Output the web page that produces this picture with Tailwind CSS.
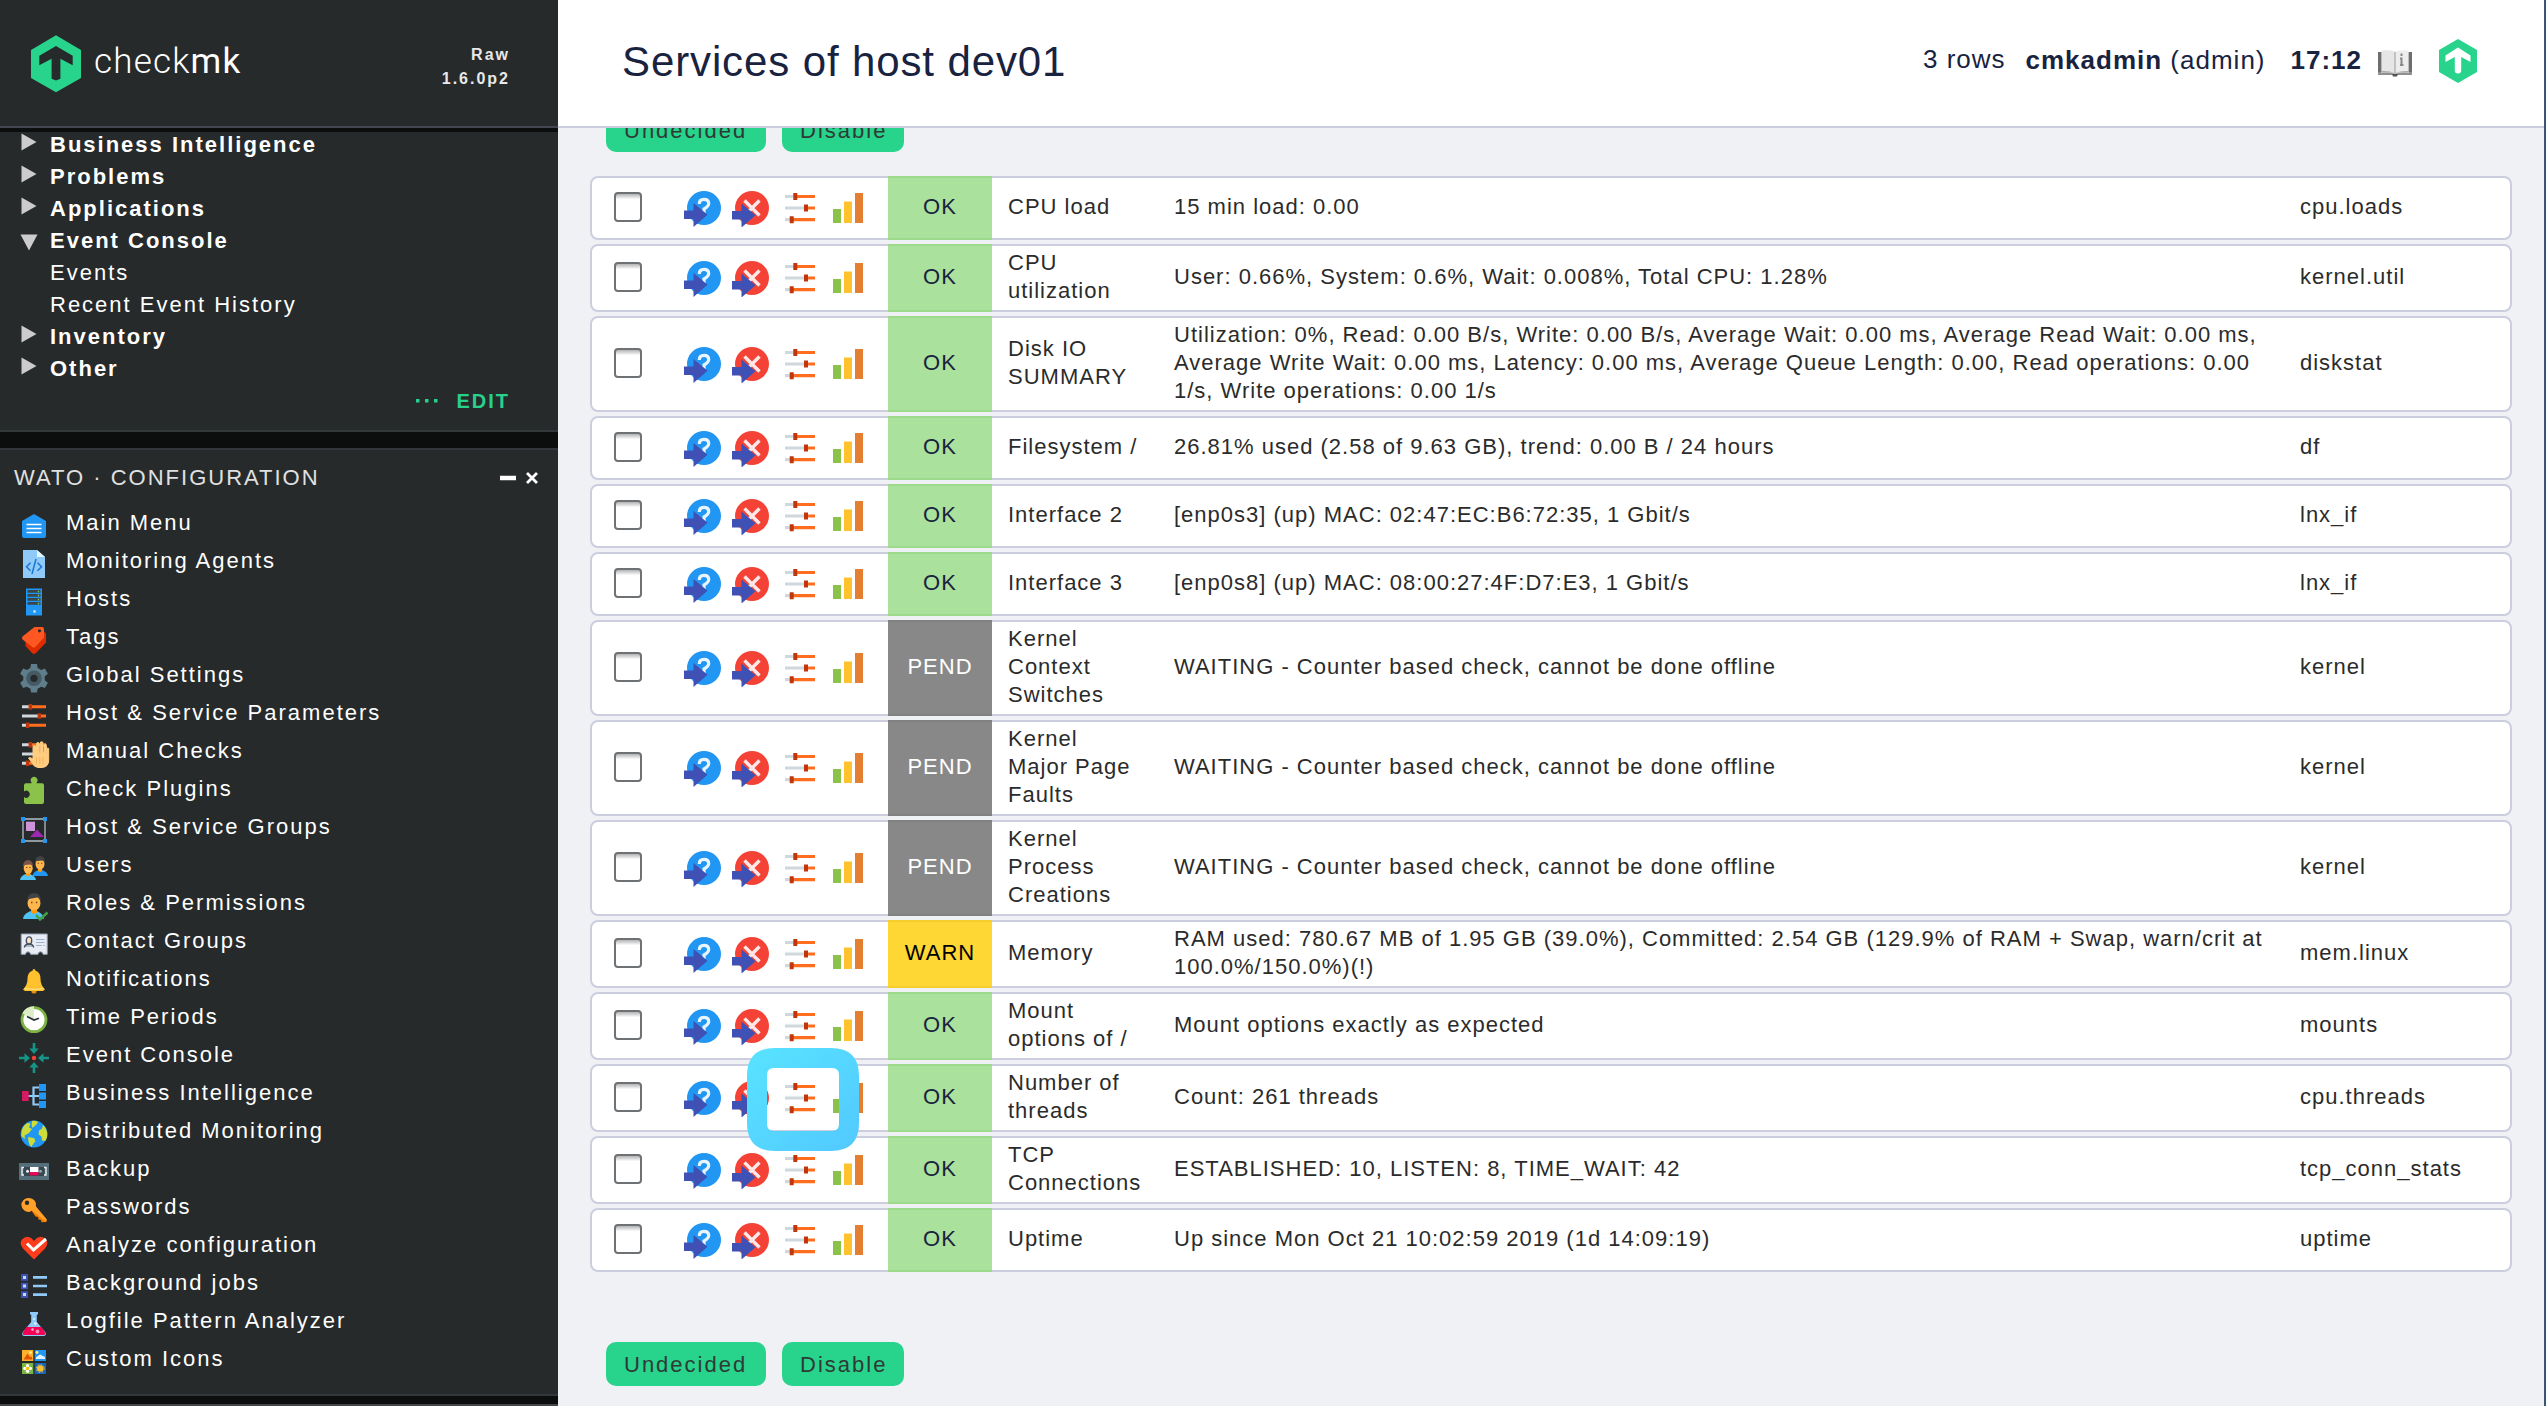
<!DOCTYPE html>
<html lang="en">
<head>
<meta charset="utf-8">
<title>Services of host dev01</title>
<script src="https://cdn.jsdelivr.net/npm/@tailwindcss/browser@4"></script>
</head>
<body class="flex h-[1406px] w-[2546px] overflow-hidden bg-[#f0f1f4] font-['Liberation_Sans',Arial,sans-serif] text-[22px] leading-[28px]">

<svg class="hidden">
  <defs>
    <symbol id="params" viewBox="0 0 32 32"><path stroke="#cfd8dc" stroke-width="3" d="M4 6.7h8M4 16h17M4 25.3h6"/><path stroke="#ff6d1f" stroke-width="3" d="M12 6.7h16M21 16h7M10 25.3h18"/><path stroke="#bf360c" stroke-width="3.4" d="M12.3 4v5.4M21.3 13.3v5.4M9.6 22.6v5.4"/></symbol>
    <symbol id="menu" viewBox="0 0 32 32"><path fill="#2196f3" d="M16 4 28 11v15a2 2 0 0 1-2 2H6a2 2 0 0 1-2-2V11z"/><path stroke="#fff" stroke-width="1.4" d="M8.500 14.500h15M8.500 18.500h15M8.500 22.500h15"/></symbol>
    <symbol id="agents" viewBox="0 0 32 32"><path fill="#90caf9" d="M5 2h14l8 7v21H5z"/><path fill="#e1f5fe" d="M19 2v7h8z"/><path fill="none" stroke="#1976d2" stroke-width="1.500" d="m12.500 14.700-4 4 4 4M19.500 14.700l4 4-4 4M18 11l-4 15"/></symbol>
    <symbol id="hosts" viewBox="0 0 32 32"><path fill="#2196f3" d="M8 2.500h16v27H8z"/><path fill="#37474f" d="M9.500 4h13v2.800h-13zM9.500 8h13v2.800h-13zM9.500 12h13v2.800h-13zM9.500 16h13v2.800h-13z"/><path stroke="#8bc34a" stroke-width="1.400" d="M20.500 4.800v1.400M20.500 8.800v1.400M20.500 12.800v1.400M20.500 16.800v1.400"/><circle cx="16.500" cy="25.500" r="1.400" fill="#bbdefb"/></symbol>
    <symbol id="tags" viewBox="0 0 32 32"><path fill="#dd2c00" d="M24 6 28 9.500v9L18 29q-2 2-4 0L7.500 22V17z"/><path fill="#ff5722" d="M16.500 3H24q2 0 2 2v8.500L17.300 23q-1.500 1.500-3 0L4.500 15.500q-1-1.500 0-3z"/><circle cx="21.500" cy="6.800" r="1.600" fill="#262a2b"/></symbol>
    <symbol id="gear" viewBox="0 0 32 32"><g fill="#607d8b"><circle cx="16" cy="16.300" r="10.800"/><path d="M13 2h6l1 6h-8zM13 30.600h6l1-6h-8z"/><path transform="rotate(60 16 16.300)" d="M13 2h6l1 6h-8zM13 30.600h6l1-6h-8z"/><path transform="rotate(120 16 16.300)" d="M13 2h6l1 6h-8zM13 30.600h6l1-6h-8z"/></g><circle cx="16" cy="16.300" r="7.800" fill="#455a64"/><circle cx="16" cy="16.300" r="3.600" fill="#262a2b"/></symbol>
    <symbol id="manual" viewBox="0 0 32 32"><use href="#params" width="32" height="32"/><path fill="#ffcc80" stroke="#ffcc80" stroke-linejoin="round" d="M15 17V9q0-1.500 1.300-1.500T17.500 9v6h1V6q0-1.500 1.400-1.500T21.300 6v9h1V5q0-1.300 1.300-1.300T25 5v10h1V7.500Q26 6 27.200 6t1.200 1.500V16h.6v-5q0-1 .8-1t.9 1V22q0 7-6.700 7.500h-4Q16 29 14.500 25.500L10.500 20q1.500-1.500 4.500 1z"/><path stroke="#f5b55f" d="M18.500 19v7M21.800 19v7M25 19v7"/></symbol>
    <symbol id="plugins" viewBox="0 0 32 32"><path fill="#8bc34a" d="M8 7.300h5.500V6.500A3.400 3.400 0 1 1 18.700 6.500V7.300H24a2 2 0 0 1 2 2V26a2 2 0 0 1-2 2H8a2 2 0 0 1-2-2V21a3.500 3.500 0 1 0 0-5.500V9.300a2 2 0 0 1 2-2z"/></symbol>
    <symbol id="groups" viewBox="0 0 32 32"><path fill="none" stroke="#b0bec5" stroke-width="1.300" d="M5 5h22v22H5z"/><path fill="#2196f3" d="M3 3h4v4H3zM25 3h4v4h-4zM3 25h4v4H3zM25 25h4v4h-4z"/><path fill="#ce93d8" d="M8 7.700h9V17H8z"/><path fill="#9c27b0" d="m12 23 7-7.500 7 7.500z"/></symbol>
    <symbol id="users" viewBox="0 0 32 32"><path fill="#2196f3" d="M14.500 24q.5-5 7.500-6.500Q29.500 19 30 24z"/><path fill="#ff9800" d="M20 15h4v4q-2 2-4 0z"/><ellipse cx="22" cy="12" rx="4.500" ry="5.700" fill="#ffb74d"/><path fill="#424242" d="M17 11.500Q16.500 4 22.500 4 27.500 4.500 27 11.500 26 8.500 24 8.500L18.500 9z"/><path fill="#4fc3f7" d="M2 28q.5-5 7.500-6.500Q17.500 23 18 28z"/><path fill="#ff9800" d="M8 19h4.500v4.200q-2.200 1.600-4.500 0z"/><ellipse cx="10.200" cy="16.300" rx="4.500" ry="5.700" fill="#ffb74d"/><path fill="#795548" d="M5 15.500Q4.500 8 10.500 8q5 .5 4.500 7.500-1-3-3-3l-5.500.5z"/><path stroke="#784719" d="M8 15.500h1.300M11.300 15.500h1.300M19.700 11.300H21M23 11.300h1.300"/></symbol>
    <symbol id="roles" viewBox="0 0 32 32"><path fill="#4fc3f7" d="M5 29q.5-7 11-8.500Q25 22 26 29z"/><path fill="#ff9800" d="M13 17h6v5.500q-3 2.500-6 0z"/><ellipse cx="16" cy="13" rx="6.500" ry="7.500" fill="#ffb74d"/><path fill="#424242" d="M9.300 12.500Q8.500 3 16.500 3q7 .5 6.200 9.500-1-5-3.700-5l-8 1.500z"/><path stroke="#784719" stroke-width="1.300" d="M13 12.500h1.500M17.800 12.500h1.500"/><path fill="none" stroke="#43a047" stroke-width="2.600" d="m18 25 4 4.500 7.500-7"/></symbol>
    <symbol id="contact" viewBox="0 0 32 32"><path fill="#e8edf5" stroke="#9aa3b5" d="M3.200 6h26v20.300H25a2.500 2.500 0 1 0-5 0h-7.500a2.500 2.500 0 1 0-5 0H3.200z"/><path fill="#b0bec5" d="M6 19q1-3.500 5-3.500t5 3.500z"/><ellipse cx="11" cy="12.500" rx="2.700" ry="3.600" fill="#fbe1c8" stroke="#455264" stroke-width="1.400"/><path fill="none" stroke="#455264" stroke-width="1.300" d="M6.300 19.500q.7-3.500 4.700-3.500t4.700 3.500"/><path stroke="#9db4cf" stroke-width="1.200" d="M18 11.500h8.500M18 14.500h8.500M18 17.500h6M25.200 17.500h1.500"/></symbol>
    <symbol id="bell" viewBox="0 0 32 32"><circle cx="16" cy="25" r="2.600" fill="#e08e0b"/><path fill="#ffc12e" d="M16 3q1.500 0 1.500 1.800Q22.500 6 22.500 13q0 6 4.500 10.500L25 25H7l-2-1.500Q9.500 19 9.500 13q0-7 5-8.200Q14.500 3 16 3z"/><path fill="none" stroke="#ffe082" stroke-width="1.200" d="M6.500 22.300q9.500 2.200 19 0"/></symbol>
    <symbol id="clock" viewBox="0 0 32 32"><circle cx="16" cy="15.700" r="12" fill="#fff" stroke="#7cb342" stroke-width="2.800"/><path fill="#dcedc8" d="M16 15.700V2.300A13.400 13.400 0 0 0 4.300 9.300z"/><path fill="none" stroke="#263238" stroke-width="1.700" d="m9 12.500 7 3.500 5-1.800"/></symbol>
    <symbol id="event" viewBox="0 0 32 32"><circle cx="16" cy="16" r="2.200" fill="#f44336"/><path fill="#159588" d="M14.700 1h2.600v5.500h3.400L16 12l-4.700-5.500h3.400zM14.700 31h2.600v-5.500h3.400L16 20l-4.700 5.500h3.400zM1 14.700v2.600h5.500v3.400L12 16l-5.500-4.700v3.400zM31 14.700v2.600h-5.500v3.400L20 16l5.500-4.700v3.400z"/></symbol>
    <symbol id="bi" viewBox="0 0 32 32"><path fill="none" stroke="#90caf9" stroke-width="2.200" d="M10 16h12M22 7.500h-6.500v17H22"/><path fill="#d81b60" d="M4 11h6.700v10H4z"/><path fill="#2196f3" d="M21 4h7v7h-7zM21 12.500h7v7h-7zM21 21h7v7h-7z"/></symbol>
    <symbol id="globe" viewBox="0 0 32 32"><circle cx="16" cy="16" r="13.400" fill="#2196f3"/><path fill="#cddc39" d="M14 3q3.500-.5 6 .8-.5 2.500-3.500 4.500L14.500 10l-.8-3zM9 5l3.500.500-1.500 4 3 1.500-3 4-4.500 2.500.5 3.500L3.200 18Q3 9.500 9 5zM10 19l6 1 1.500 3-3 4-1 2q-2.500-1.500-3-5.500zM25 7q4.300 4 4.300 9.500 0 4-2 6.500L24 22.500l-.5-4-3-2 .5-4 3-2z"/></symbol>
    <symbol id="backup" viewBox="0 0 32 32"><path fill="#546e7a" d="M1 7h30v17H1z"/><path fill="#37474f" d="M5.500 11h21v9h-21z"/><path fill="none" stroke="#eceff1" stroke-width="1.400" d="M6 11.500H4v7.500h2M26 11.500h2v7.500h-2"/><circle cx="9.500" cy="15.300" r="1.500" fill="#eceff1"/><circle cx="22.500" cy="15.300" r="1.500" fill="#90a4ae"/><path fill="#fff" d="M12 11h8.500v5.200H12z"/><path fill="#f50057" d="M12 16.200h8.500v3.100H12z"/></symbol>
    <symbol id="key" viewBox="0 0 32 32"><path fill="#f57c00" d="m13 16 3-2 12.500 11.500V28l-5 .3-.5-2.300-2.500-.5-.5-2.500-2.500-.5z"/><path fill="#ffa029" d="M11 4a7 7 0 0 1 7 8.500L28.500 25v2l-1 .5L14 16.500l-2 1.300A7 7 0 1 1 11 4z"/><circle cx="9" cy="8.800" r="2.200" fill="#262a2b"/></symbol>
    <symbol id="heart" viewBox="0 0 32 32"><path fill="#ff3d1c" d="M16 27.500 5 16.500Q1 11.500 4 7.500q4.500-5 9.500-1.200L16 9l2.500-2.700q5-3.800 9.500 1.200 3 4-1 9z"/><path fill="none" stroke="#fff" stroke-width="3" d="m9 11.500 6.500 6.500L28 7"/></symbol>
    <symbol id="jobs" viewBox="0 0 32 32"><path fill="#3f51b5" d="M3 4h7v6.700H3zM3 12.700h7v6.600H3zM3 21.300h7V28H3z"/><path fill="#bbdefb" d="M5 5.900h3v3H5zM5 14.500h3v3H5zM5 23.100h3v3H5z"/><path stroke="#90caf9" stroke-width="2.700" d="M15 7.300h14M15 16h14M15 24.700h14"/></symbol>
    <symbol id="flask" viewBox="0 0 32 32"><path fill="#90caf9" d="M12 4h8v2.500h-1.200V14L27.500 24.500q1 3.500-2 3.500h-19q-3 0-2-3.500L13.200 14V6.500H12z"/><path fill="#f50057" d="M8.500 19h15l3.500 5.500q.5 2.500-1.500 2.500h-19Q4.500 27 5 24.500z"/><circle cx="14.500" cy="21.500" r="1.300" fill="#f8bbd0"/><circle cx="19.500" cy="23.500" r="1.900" fill="#f48fb1"/><circle cx="16" cy="11" r="1" fill="#e3f2fd"/><circle cx="17.300" cy="15.500" r="1.300" fill="#e3f2fd"/></symbol>
    <symbol id="custom" viewBox="0 0 32 32"><path fill="#fbb12d" d="M4 4h11.300v11H4z"/><path fill="#2196f3" d="M16.700 4H28v11H16.700z"/><path fill="#7cb342" d="M4 17h11.300v11H4z"/><path fill="#1565c0" d="M16.700 17H28v11H16.700z"/><path fill="#e65100" d="m5.500 13.500 4-6 2.500 3.500 1.500-.5 1 3z"/><circle cx="12.700" cy="6.500" r="1.300" fill="#fff59d"/><circle cx="19" cy="6.500" r="1.400" fill="#fff176"/><path fill="#e3f2fd" d="M18 13q-.5-2.500 2-3 2-3 4.500 0 3 0 2.500 3z"/><g fill="#fff"><circle cx="9.600" cy="19.800" r="1.700"/><circle cx="9.600" cy="25.200" r="1.700"/><circle cx="6.900" cy="22.500" r="1.700"/><circle cx="12.300" cy="22.500" r="1.700"/></g><circle cx="9.600" cy="22.500" r="1.800" fill="#ffc107"/><circle cx="22.300" cy="22.500" r="3.300" fill="#fbc02d"/><circle cx="22.300" cy="22.500" r="4" fill="none" stroke="#fbc02d" stroke-dasharray="1.600 1.540"/></symbol>
  </defs>
</svg>

<!-- Sidebar -->
<aside class="flex w-[558px] shrink-0 flex-col bg-[#262a2b] text-white">
  <div class="flex h-[128px] shrink-0 items-start border-b-2 border-[#434652] pl-[31px] pr-[48px]">
    <svg class="mt-[35px] h-[58px] w-[50px] shrink-0" viewBox="31 35 50 58"><path fill="#28d38c" fill-rule="evenodd" d="M56 35.300 81 50v28L56 92.300 31 78V50zM56 46 39.300 55.700v9.600l12.300-6.500v19.900l4.400 1.800 4.400-1.800V58.800l12.300 6.500v-9.600z"/></svg>
    <div class="ml-[13px] mt-[41px] font-[Roboto] text-[35px] font-light leading-[42px] tracking-[1.200px]">check<span class="font-normal">mk</span></div>
    <div class="ml-auto mt-[43px] text-right text-[16px] font-bold leading-[24px] tracking-[2px] text-[#e8e8e8]"><div>Raw</div><div>1.6.0p2</div></div>
  </div>
  <div class="h-[4px] shrink-0 bg-[#0c0d0d]"></div>
  <div class="flex h-[300px] shrink-0 flex-col border-b-2 border-[#33383b] tracking-[2px]">
    <div id="tree" class="-mt-[4px]"></div>
    <div class="mt-[3px] flex h-[28px] items-center justify-end gap-[18px] pr-[48px] text-[20px] font-bold text-[#28d18b]">
      <svg class="h-[4px] w-[22px]" viewBox="0 0 22 4"><path fill="#28d18b" d="M0 0h3.500v3.500H0zM9 0h3.500v3.500H9zM18 0h3.500v3.500H18z"/></svg>
      <span>EDIT</span>
    </div>
  </div>
  <div class="h-[16px] shrink-0 bg-[#0c0d0d]"></div>
  <div class="flex h-[948px] shrink-0 flex-col border-y-2 border-[#33363a]">
    <div class="flex h-[57px] items-center pl-[14px] pr-[20px]">
      <span class="pb-[2px] tracking-[2px] text-[#e0e0e0]">WATO · CONFIGURATION</span>
      <svg class="mb-[2px] ml-auto h-[14px] w-[38px]" viewBox="0 0 38 14"><path stroke="#fff" stroke-width="4.500" d="M0 7h16"/><path stroke="#fff" stroke-width="2.800" d="m27 2 10 10M37 2 27 12"/></svg>
    </div>
    <div id="wato" class="tracking-[2px]"></div>
  </div>
  <div class="h-[8px] shrink-0 bg-[#0c0d0d]"></div>
  <div class="h-[2px] shrink-0 bg-[#434549]"></div>
</aside>

<!-- Main pane -->
<main class="flex w-[1986px] shrink-0 flex-col tracking-[1px] text-[#2b2b2b]">
  <header class="flex h-[128px] shrink-0 items-start border-b-2 border-[#cccddf] bg-white pl-[64px] pr-[67px] text-[26px] text-[#19233f]">
    <h1 class="mt-[37px] text-[42px] leading-[50px] tracking-[0.880px]">Services of host dev01</h1>
    <span class="ml-auto mt-[45px]">3 rows</span>
    <span class="ml-[20px] mt-[46px]"><b>cmkadmin</b> (admin)</span>
    <b class="ml-[25px] mt-[46px]">17:12</b>
    <svg class="ml-[16px] mt-[49px] h-[28px] w-[34px]" viewBox="0 0 34 28"><path fill="#909090" d="M0 3h34v23H0z"/><path fill="#6e6e6e" d="M0 3h3v20H0zM31 3h3v20h-3z"/><path fill="#555" d="M14 25h6l-1 2.500h-4z"/><path fill="#c4c4c4" d="M3 22.500h28V24q-9-1-14 1-5-2-14-1z"/><path fill="#e6e6e6" d="M3.500 1.500Q11 .5 17 2.500V24Q11 21.500 3.500 22z"/><path fill="#ededed" d="M30.500 1.500Q23 .5 17 2.500V24q6-2.500 13.500-2z"/><path stroke="#b5b5b5" stroke-width="1.500" d="M17 3v21"/><path stroke="#8a8a8a" stroke-width="2" d="M23.500 4.500V7M23.500 8.500v8M22 9.500h2M22 16h3.500"/></svg>
    <svg class="ml-[27px] mt-[39px] h-[44px] w-[38px]" viewBox="0 0 38 44"><path fill="#28d38c" d="m19 0 19 11v22L19 44 0 33V11z"/><path fill="#fff" d="M19 8.500 31.500 16.500v6.500L22.200 18V31.500q0 3-3.200 3t-3.200-3V18L6.500 23v-6.500z"/></svg>
  </header>
  <div class="h-[24px] shrink-0 overflow-hidden">
    <div class="-mt-[20px] flex gap-[16px] pl-[48px] tracking-[2px] text-[#2f3a36]">
      <div class="flex h-[44px] w-[160px] items-center rounded-[10px] bg-[#28d38c] pl-[18px] pt-[2px]">Undecided</div>
      <div class="flex h-[44px] w-[122px] items-center rounded-[10px] bg-[#28d38c] pl-[18px] pt-[2px]">Disable</div>
    </div>
  </div>
  <div class="relative ml-[32px] mt-[24px] w-[1922px]">
    <div id="services" class="flex flex-col gap-[4px]"></div>
    <svg class="absolute left-[157px] top-[872px] h-[103px] w-[112px]" viewBox="0 0 112 103">
      <defs><linearGradient id="ring" x1="0" y1="0" x2="1" y2="1"><stop offset="0" stop-color="#58e3ff"/><stop offset="1" stop-color="#52c9ff"/></linearGradient></defs>
      <path fill="url(#ring)" fill-rule="evenodd" d="M28 0h56q28 0 28 28v47q0 28-28 28H28Q0 103 0 75V28Q0 0 28 0zM27 20q-7 0-7 7v49q0 7 7 7h58q7 0 7-7V27q0-7-7-7z"/>
    </svg>
  </div>
  <div class="mt-[70px] flex gap-[16px] pl-[48px] tracking-[2px] text-[#2f3a36]">
    <div class="flex h-[44px] w-[160px] items-center rounded-[10px] bg-[#28d38c] pl-[18px] pt-[1px]">Undecided</div>
    <div class="flex h-[44px] w-[122px] items-center rounded-[10px] bg-[#28d38c] pl-[18px] pt-[1px]">Disable</div>
  </div>
</main>
<div class="w-[2px] shrink-0 bg-[#3b5576]"></div>

<script>
const tree = [["r","Business Intelligence"],["r","Problems"],["r","Applications"],["d","Event Console"],["","Events"],["","Recent Event History"],["r","Inventory"],["r","Other"]];
const marks = {
  r: '<svg class="ml-[21px] mt-[5px] h-[18px] w-[16px]" viewBox="0 0 16 18"><path fill="#ccc" d="M.5 .500 15.500 9 .5 17.500z"/></svg>',
  d: '<svg class="ml-[20px] mt-[10px] h-[17px] w-[18px]" viewBox="0 0 18 17"><path fill="#ccc" d="M.5 .500h17L9 16.500z"/></svg>',
  "": ''
};
document.getElementById("tree").innerHTML = tree.map(([m, t]) =>
  `<div class="flex h-[32px] leading-[34px]"><div class="w-[50px] shrink-0">${marks[m]}</div><span class="${m ? "font-bold" : "font-normal"}">${t}</span></div>`).join("");

const wato = [["menu","Main Menu"],["agents","Monitoring Agents"],["hosts","Hosts"],["tags","Tags"],["gear","Global Settings"],["params","Host &amp; Service Parameters"],["manual","Manual Checks"],["plugins","Check Plugins"],["groups","Host &amp; Service Groups"],["users","Users"],["roles","Roles &amp; Permissions"],["contact","Contact Groups"],["bell","Notifications"],["clock","Time Periods"],["event","Event Console"],["bi","Business Intelligence"],["globe","Distributed Monitoring"],["backup","Backup"],["key","Passwords"],["heart","Analyze configuration"],["jobs","Background jobs"],["flask","Logfile Pattern Analyzer"],["custom","Custom Icons"]];
document.getElementById("wato").innerHTML = wato.map(([i, t]) =>
  `<div class="flex h-[38px] pl-[18px]"><svg class="mt-[3px] h-[32px] w-[32px]"><use href="#${i}"/></svg><span class="ml-[16px] leading-[31px]">${t}</span></div>`).join("");

const W = "WAITING - Counter based check, cannot be done offline";
const services = [
  ["OK","CPU load","15 min load: 0.00","cpu.loads"],
  ["OK","CPU<br>utilization","User: 0.66%, System: 0.6%, Wait: 0.008%, Total CPU: 1.28%","kernel.util"],
  ["OK","Disk IO<br>SUMMARY","Utilization: 0%, Read: 0.00 B/s, Write: 0.00 B/s, Average Wait: 0.00 ms, Average Read Wait: 0.00 ms,<br>Average Write Wait: 0.00 ms, Latency: 0.00 ms, Average Queue Length: 0.00, Read operations: 0.00<br>1/s, Write operations: 0.00 1/s","diskstat"],
  ["OK","Filesystem /","26.81% used (2.58 of 9.63 GB), trend: 0.00 B / 24 hours","df"],
  ["OK","Interface 2","[enp0s3] (up) MAC: 02:47:EC:B6:72:35, 1 Gbit/s","lnx_if"],
  ["OK","Interface 3","[enp0s8] (up) MAC: 08:00:27:4F:D7:E3, 1 Gbit/s","lnx_if"],
  ["PEND","Kernel<br>Context<br>Switches",W,"kernel"],
  ["PEND","Kernel<br>Major Page<br>Faults",W,"kernel"],
  ["PEND","Kernel<br>Process<br>Creations",W,"kernel"],
  ["WARN","Memory","RAM used: 780.67 MB of 1.95 GB (39.0%), Committed: 2.54 GB (129.9% of RAM + Swap, warn/crit at<br>100.0%/150.0%)(!)","mem.linux"],
  ["OK","Mount<br>options of /","Mount options exactly as expected","mounts"],
  ["OK","Number of<br>threads","Count: 261 threads","cpu.threads"],
  ["OK","TCP<br>Connections","ESTABLISHED: 10, LISTEN: 8, TIME_WAIT: 42","tcp_conn_stats"],
  ["OK","Uptime","Up since Mon Oct 21 10:02:59 2019 (1d 14:09:19)","uptime"]
];
const state = {
  OK: "bg-[#aae19c] border-[#9cd98a] text-[#19233f]",
  PEND: "bg-[#888888] border-[#808080] text-white",
  WARN: "bg-[#ffd734] border-[#f5cd2c] text-black"
};
const actions = `
  <svg class="h-[38px] w-[38px]" viewBox="0 0 38 38"><circle cx="21" cy="19" r="17" fill="#2196f3"/><path fill="none" stroke="#e8f4fe" stroke-width="3.200" d="M16.300 15q0-4.600 4.700-4.600t4.700 4.200q0 2.700-4.700 5.400v4"/><path fill="#3f51b5" d="M1 21.500h9.500V14L24.500 25.800 10.500 38v-8H1z"/></svg>
  <svg class="ml-[10px] h-[38px] w-[38px]" viewBox="0 0 38 38"><circle cx="21" cy="19" r="17" fill="#f44336"/><path fill="none" stroke="#fde8e7" stroke-width="3.400" d="m13.500 11.500 15 15M28.500 11.500l-15 15"/><path fill="#3f51b5" d="M1 22h9.500v-7.500L24.500 26.300 10.500 38.500v-8H1z"/></svg>
  <svg class="ml-[16px] h-[32px] w-[30px]" viewBox="0 0 30 32"><path stroke="#cfd8dc" stroke-width="3.200" d="M0 4.500h9M0 16h20M0 27.700h6"/><path stroke="#ff6d1f" stroke-width="3.200" d="M11 4.500h19M21 16h9M8 27.700h22"/><path stroke="#bf360c" stroke-width="4" d="M10.300 1v7M21 12.500v7M6.700 24.200v7"/></svg>
  <svg class="ml-[18px] h-[30px] w-[30px]" viewBox="0 0 30 30"><path fill="#8bc34a" d="M0 16h8v14H0z"/><path fill="#ffc12e" d="M11 8.500h8V30h-8z"/><path fill="#e47f31" d="M22 0h8v30h-8z"/></svg>`;
document.getElementById("services").innerHTML = services.map(([s, n, o, c]) => {
  const lines = Math.max(n.split("<br>").length, o.split("<br>").length);
  const h = lines === 1 ? "h-[64px]" : lines === 2 ? "h-[68px]" : "h-[96px]";
  return `<div class="flex ${h} items-center rounded-[8px] border-2 border-[#cccddf] bg-white">
    <div class="mb-[2px] ml-[22px] h-[30px] w-[28px] shrink-0 rounded-[4px] border-2 border-[#6f7275] bg-linear-to-b from-[#b4b4b4] from-0% to-white to-20%"></div>
    <div class="ml-[41px] flex w-[205px] shrink-0 items-center">${actions}</div>
    <div class="flex w-[104px] shrink-0 items-center justify-center self-stretch -my-[2px] border-y-2 pb-[2px] ${state[s]}">${s}</div>
    <div class="w-[166px] shrink-0 pb-[2px] pl-[16px]">${n}</div>
    <div class="w-[1126px] shrink-0 whitespace-nowrap pb-[2px] pl-[16px]">${o}</div>
    <div class="pb-[2px] pl-[16px]">${c}</div>
  </div>`;
}).join("");
</script>
</body>
</html>
